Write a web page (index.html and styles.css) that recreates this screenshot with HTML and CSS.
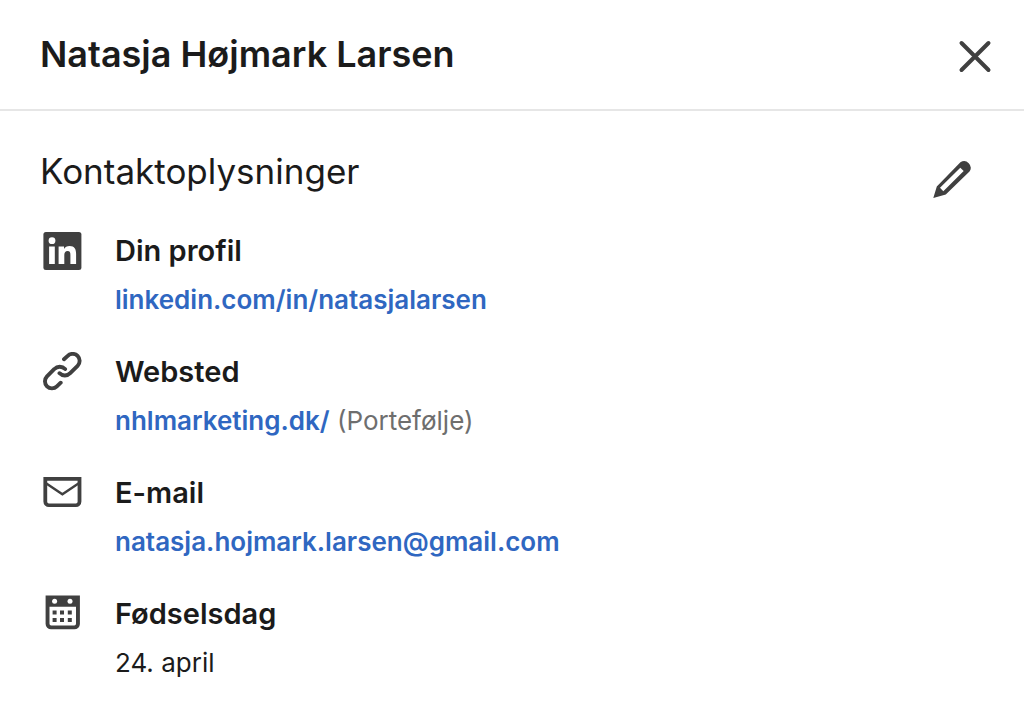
FILE: index.html
```html
<!DOCTYPE html>
<html lang="da">
<head>
    <meta charset="UTF-8">
    <meta name="viewport" content="width=device-width, initial-scale=1.0">
    <title>Natasja Højmark Larsen</title>
    <link rel="stylesheet" href="styles.css">
</head>
<body>
    <header class="modal-header">
        <h1>Natasja Højmark Larsen</h1>
        <button type="button" class="icon-button" aria-label="Luk">
            <svg class="icon" viewBox="0 0 40 40" aria-hidden="true">
                <path d="M6.5 6L33.5 33M33.5 6L6.5 33" fill="none" stroke="currentColor" stroke-width="4" stroke-linecap="round"/>
            </svg>
        </button>
    </header>

    <main class="modal-content">
        <div class="section-header">
            <h2>Kontaktoplysninger</h2>
            <button type="button" class="icon-button" aria-label="Rediger">
                <svg class="icon" viewBox="0 0 40 40" aria-hidden="true">
                    <path fill="currentColor" fill-rule="evenodd" d="M1.3 39L4.8 27.5L28.4 3.3A6.6 6.6 0 0 1 37.5 12.5L13.8 35.5ZM8 28.7L11.3 32.3L31.7 12L28.3 8.7Z"/>
                </svg>
            </button>
        </div>

        <ul class="contact-list">
            <li class="contact-item">
                <svg class="icon" viewBox="0 0 40 40" aria-hidden="true">
                    <rect x="1.4" y="1" width="38" height="38" rx="2.5" fill="currentColor"/>
                    <circle cx="10" cy="9.7" r="3.4" fill="#fff"/>
                    <path d="M7.1 15.6H12.8V33H7.1ZM16.6 15.6H22V18C23 16.2 25 15.1 27.6 15.1C32.6 15.1 34.1 18.2 34.1 23V33H28.4V24C28.4 21.5 27.9 20 25.6 20C23.2 20 22.3 21.7 22.3 24V33H16.6Z" fill="#fff"/>
                </svg>
                <div>
                    <h3>Din profil</h3>
                    <p><a href="#">linkedin.com/in/natasjalarsen</a></p>
                </div>
            </li>
            <li class="contact-item">
                <svg class="icon" viewBox="0 0 40 40" aria-hidden="true">
                    <path d="M22 7.3L25.7 3.9A7 7 0 0 1 35.6 13.8L28.2 21.2A7.4 7.4 0 0 1 17.5 21.2M18.7 30.7L14.9 34.3A7 7 0 0 1 5 24.4L12.4 17A7.4 7.4 0 0 1 23.1 17" fill="none" stroke="currentColor" stroke-width="3.9" stroke-linecap="round"/>
                </svg>
                <div>
                    <h3>Websted</h3>
                    <p><a href="#">nhlmarketing.dk/</a> <span class="note">(Portefølje)</span></p>
                </div>
            </li>
            <li class="contact-item">
                <svg class="icon" viewBox="0 0 40 40" aria-hidden="true">
                    <path fill="currentColor" fill-rule="evenodd" d="M1.4 4H39.4V28.5A5.5 5.5 0 0 1 33.9 34H6.9A5.5 5.5 0 0 1 1.4 28.5ZM5.2 7.8V28.7A1.7 1.7 0 0 0 6.9 30.4H33.9A1.7 1.7 0 0 0 35.6 28.7V7.8Z"/>
                    <path d="M4 10.2L20.4 21.3L36.8 10.2" fill="none" stroke="currentColor" stroke-width="2.4"/>
                </svg>
                <div>
                    <h3>E-mail</h3>
                    <p><a href="#">natasja.hojmark.larsen@gmail.com</a></p>
                </div>
            </li>
            <li class="contact-item">
                <svg class="icon" viewBox="0 0 40 40" aria-hidden="true">
                    <path d="M3.6 1.4H37.9V29.8A5.5 5.5 0 0 1 32.4 35.3H9.1A5.5 5.5 0 0 1 3.6 29.8Z" fill="currentColor"/>
                    <path d="M7.5 12.7H34V29.8A1.7 1.7 0 0 1 32.3 31.5H9.2A1.7 1.7 0 0 1 7.5 29.8Z" fill="#fff"/>
                    <circle cx="12.6" cy="7.2" r="2.5" fill="#fff"/>
                    <circle cx="28" cy="7.2" r="2.5" fill="#fff"/>
                    <path d="M10.6 16.4H14.6V20.4H10.6ZM18 16.4H22V20.4H18ZM25.8 16.4H29.8V20.4H25.8ZM10.6 23.9H14.6V27.9H10.6ZM18 23.9H22V27.9H18ZM25.8 23.9H29.8V27.9H25.8Z" fill="currentColor"/>
                </svg>
                <div>
                    <h3>Fødselsdag</h3>
                    <p>24. april</p>
                </div>
            </li>
        </ul>
    </main>
</body>
</html>
```

FILE: styles.css
```css
* {
    box-sizing: border-box;
}
body {
    font-family: Inter, "Liberation Sans", sans-serif;
    background-color: #fff;
    color: #1b1b1b;
    margin: 0;
}
h1, h2, h3, p, ul {
    margin: 0;
    padding: 0;
}
.modal-header {
    display: flex;
    justify-content: space-between;
    align-items: flex-end;
    padding: 31px 29px 32px 40px;
    border-bottom: 2px solid #e6e6e6;
}
h1 {
    font-size: 36px;
    line-height: 46px;
    font-weight: 600;
}
.icon-button {
    padding: 0;
    border: none;
    background: none;
    color: #404040;
    cursor: pointer;
}
.icon {
    display: block;
    flex: none;
    width: 40px;
    height: 40px;
    color: #404040;
}
.modal-content {
    padding: 32px 52px 32px 40px;
}
.section-header {
    display: flex;
    justify-content: space-between;
    align-items: flex-end;
}
h2 {
    font-size: 35px;
    line-height: 56px;
    font-weight: 400;
}
.contact-list {
    display: flex;
    flex-direction: column;
    gap: 24px;
    margin-top: 28px;
    padding-left: 2px;
    list-style: none;
}
.contact-item {
    display: flex;
    gap: 33px;
}
.contact-item .icon {
    margin-top: 4px;
}
h3 {
    font-size: 29px;
    line-height: 48px;
    font-weight: 600;
}
.contact-item p {
    font-size: 26px;
    line-height: 49px;
}
a {
    color: #2f67c1;
    font-weight: 600;
    text-decoration: none;
}
a:hover {
    text-decoration: underline;
}
.note {
    color: #6e6e6e;
}
```
